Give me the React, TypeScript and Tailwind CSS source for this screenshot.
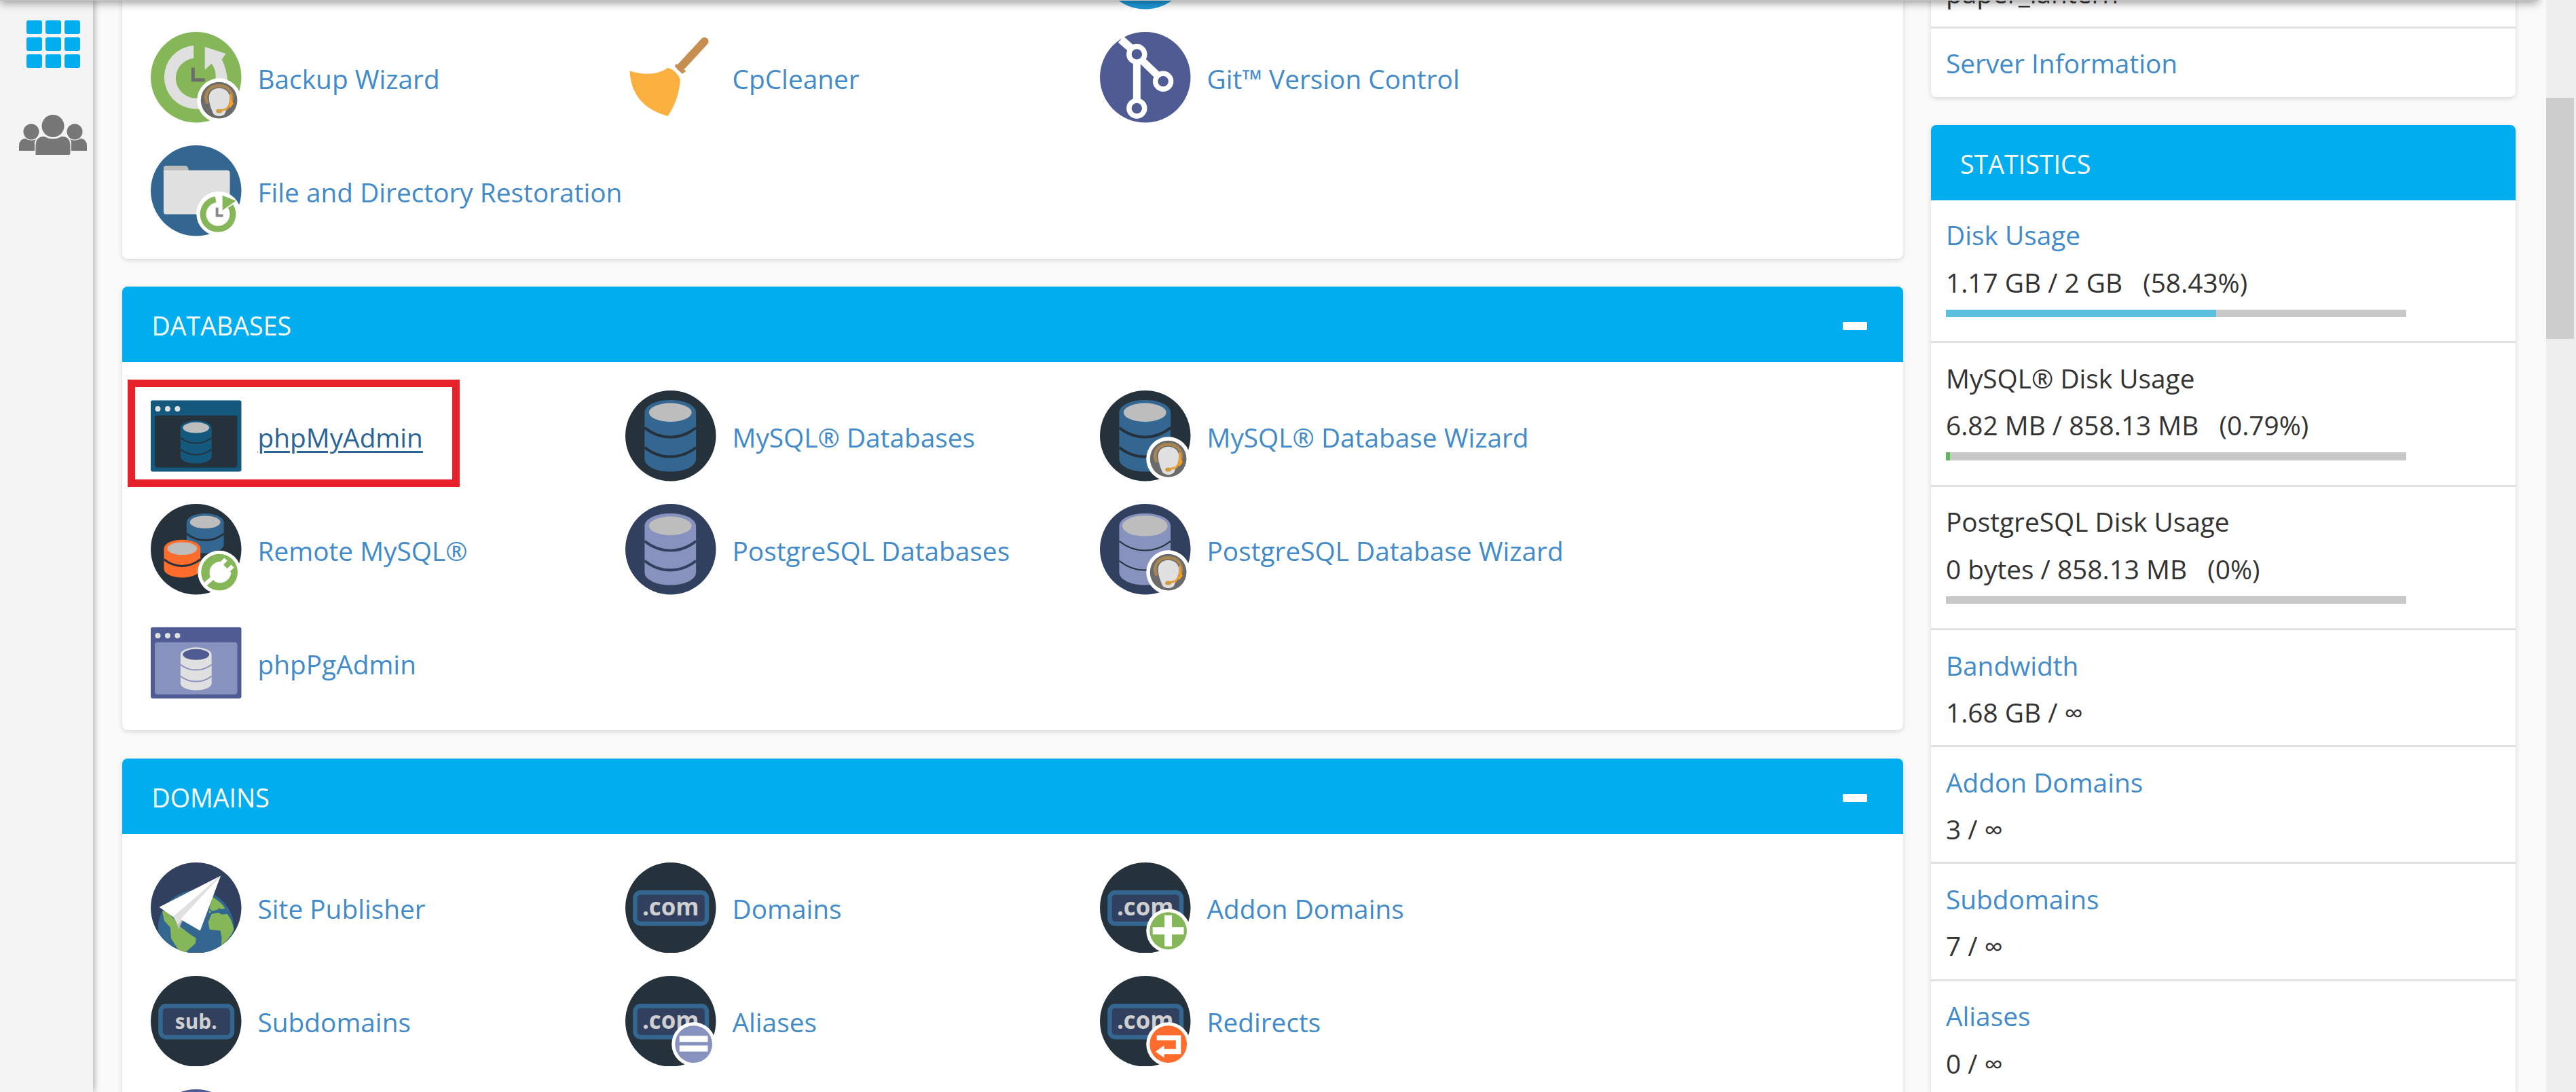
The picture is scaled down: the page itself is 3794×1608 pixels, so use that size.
import type { ReactNode } from "react";

const INK = "#26323b";
const NAVY = "#31405e";
const BLUE = "#336791";
const GREEN = "#85b657";
const ORANGE = "#ff6c2c";
const LILAC = "#8892bf";
const INDIGO = "#4f5b93";
const LIGHT = "#e0e0e0";
const SILVER = "#bdbdbd";

function Icon({ children }: { children?: ReactNode }) {
  return (
    <svg viewBox="0 0 134 134" className="block size-[133.5px] shrink-0">
      {children}
    </svg>
  );
}

function Disc({ fill }: { fill: string }) {
  return <circle cx="67" cy="67" r="67" fill={fill} />;
}

type CylinderProps = {
  x: number;
  w: number;
  top: number;
  bottom: number;
  ry: number;
  fill: string;
  lid: string;
  line: string;
  bands: number[];
  inset: number;
  stroke: number;
};

function Cylinder({ x, w, top, bottom, ry, fill, lid, line, bands, inset, stroke }: CylinderProps) {
  const r = x + w;
  const rx = w / 2;
  return (
    <g>
      <path
        d={`M${x} ${top + ry}A${rx} ${ry} 0 0 1 ${r} ${top + ry}V${bottom - ry}A${rx} ${ry} 0 0 1 ${x} ${bottom - ry}Z`}
        fill={fill}
      />
      <ellipse cx={x + rx} cy={top + ry} rx={rx - inset} ry={ry - inset * 0.72} fill={lid} />
      {bands.map((y) => (
        <path
          key={y}
          d={`M${x} ${y}Q${x + rx * 0.45} ${y + ry * 0.75} ${x + rx} ${y + ry * 0.75}T${r} ${y}`}
          fill="none"
          stroke={line}
          strokeWidth={stroke}
        />
      ))}
    </g>
  );
}

function WizardBadge() {
  return (
    <g>
      <circle cx="101" cy="101" r="32.500" fill="#fff" />
      <circle cx="101" cy="101" r="27" fill="#6b6b6b" />
      <path d="M84 106C77 92 86 79.500 101 79.500S125 92 118 106" fill="none" stroke="#a98552" strokeWidth="4.500" />
      <path d="M86 97C86 88 93 83 101 83S117 88 117 98C117 106 112 114 110 120C108 126 95 126 92 120C90 114 86 106 86 97Z" fill={LIGHT} />
      <path d="M118 92L119 105L112 114L100 117" fill="none" stroke="#e3a03a" strokeWidth="3" />
      <path d="M117 101L120 106L116 111" fill="none" stroke="#f7a11b" strokeWidth="4" />
      <ellipse cx="101" cy="117" rx="4.500" ry="3" fill="#d39a3c" />
    </g>
  );
}

function BackupWizardIcon() {
  return (
    <Icon>
      <Disc fill={GREEN} />
      <path d="M63.500 20A47 47 0 1 0 113.500 73C113 62 110 50 105 41L111 32L80 22V56L90 47A30 30 0 0 1 96 67A29.500 29.500 0 1 1 63.500 39Z" fill={LIGHT} />
      <path d="M62.500 53V71H80" fill="none" stroke="#6d6d6d" strokeWidth="5" />
      <WizardBadge />
    </Icon>
  );
}

function RestoreIcon() {
  return (
    <Icon>
      <Disc fill={BLUE} />
      <path d="M19 34a4 4 0 0 1 4-4H51q3 0 4 3l3 9H19Z" fill={SILVER} />
      <path d="M19 37H113q4 0 4 4V98q0 4-4 4H23q-4 0-4-4Z" fill={LIGHT} />
      <circle cx="100.500" cy="101" r="33" fill="#fff" />
      <path d="M96 80A22 22 0 1 0 118 90" fill="none" stroke={GREEN} strokeWidth="9" />
      <path d="M106 74L126 82L106 96Z" fill={GREEN} />
      <path d="M98 92V104H107" fill="none" stroke="#8a8a8a" strokeWidth="4" />
    </Icon>
  );
}

function BroomIcon() {
  return (
    <Icon>
      <path d="M117 14L82 52" stroke="#c68f50" strokeWidth="12" strokeLinecap="round" />
      <path d="M75 47L90 58L84 62L73 51Z" fill="#c68f50" />
      <path d="M6.500 57.500Q24 63.500 40 61.500Q53 60 63 53Q77 58 81 70Q80 98 63 124.500Q9 110 6.500 57.500Z" fill="#fbb040" />
    </Icon>
  );
}

function GitIcon() {
  return (
    <Icon>
      <Disc fill={INDIGO} />
      <g stroke="#fff" fill="none">
        <path d="M31 11L48 26" strokeWidth="12" />
        <path d="M54.500 42V103M60 40L86 65" strokeWidth="11" />
        <circle cx="54.500" cy="33" r="11.500" strokeWidth="7.500" fill={INDIGO} />
        <circle cx="93.500" cy="73" r="11.500" strokeWidth="7.500" fill={INDIGO} />
        <circle cx="54.500" cy="113" r="11.500" strokeWidth="7.500" fill={INDIGO} />
      </g>
    </Icon>
  );
}

function DatabaseIcon({ tone, wizard }: { tone: "mysql" | "pg"; wizard?: boolean }) {
  const pg = tone === "pg";
  return (
    <Icon>
      <Disc fill={pg ? NAVY : INK} />
      <Cylinder
        x={28.5}
        w={76}
        top={14}
        bottom={120}
        ry={18.5}
        fill={pg ? LILAC : BLUE}
        lid={SILVER}
        line={pg && !wizard ? NAVY : INK}
        bands={[55, 84]}
        inset={pg && wizard ? 4.5 : 6.5}
        stroke={pg && wizard ? 2 : 4}
      />
      {wizard && <WizardBadge />}
    </Icon>
  );
}

function WindowIcon({ frame, panel, body, lid }: { frame: string; panel: string; body: string; lid: string }) {
  return (
    <Icon>
      <rect x="0" y="14.500" width="134" height="105.500" rx="3" fill={frame} />
      <rect x="6" y="37" width="122" height="77" rx="4" fill={panel} />
      <circle cx="10.500" cy="27" r="4" fill={LIGHT} />
      <circle cx="25" cy="27" r="4" fill={LIGHT} />
      <circle cx="39.500" cy="27" r="4" fill={LIGHT} />
      <Cylinder x={44} w={46} top={44.5} bottom={108} ry={10.5} fill={body} lid={lid} line={panel} bands={[70, 87]} inset={3.5} stroke={2} />
    </Icon>
  );
}

function RemoteIcon() {
  return (
    <Icon>
      <Disc fill={INK} />
      <Cylinder x={53} w={55} top={14} bottom={73} ry={13} fill={BLUE} lid={SILVER} line={INK} bands={[44]} inset={5} stroke={3} />
      <Cylinder x={19.5} w={54} top={53} bottom={109} ry={13} fill={ORANGE} lid={SILVER} line={INK} bands={[82]} inset={5} stroke={3} />
      <circle cx="101.500" cy="101" r="32" fill="#fff" />
      <circle cx="101.500" cy="101" r="27" fill={GREEN} />
      <path d="M78 121L92 109" stroke="#fff" strokeWidth="6" />
      <path d="M88 108C84 95 92 86 103 85L119 102C117 114 105 120 95 115Z" fill="#fff" />
      <path d="M102 91L111 82M112 101L121 92" stroke="#fff" strokeWidth="6" />
    </Icon>
  );
}

function PublisherIcon() {
  return (
    <Icon>
      <defs>
        <clipPath id="disc">
          <circle cx="67" cy="67" r="67" />
        </clipPath>
      </defs>
      <Disc fill={NAVY} />
      <g clipPath="url(#disc)">
        <circle cx="67" cy="97" r="56" fill={BLUE} />
        <path d="M91 51Q104 58 110 68L97 70L86 75L87 66Z" fill={GREEN} />
        <path d="M90 76L100 74L105 77L113 76Q121 86 123 99Q116 114 104 123L105 112L103 101L87 99L85 88Z" fill={GREEN} />
        <path d="M17 72L24 72L45 96L58 106L67 112L66 120L58 127L50 134L40 128L30 112L29 96L20 86Z" fill={GREEN} />
        <path d="M86 69l5 4l6-1m3-4l5 3l6-1" fill="none" stroke={BLUE} strokeWidth="2" />
      </g>
      <path d="M36 80L41 99L47 86Z" fill={SILVER} />
      <path d="M103.500 19.500L12.500 66L34 81Z" fill="#fff" />
      <path d="M103.500 19.500L33 80L40 92L46 85Z" fill={LIGHT} />
      <path d="M103.500 19.500L44 84L73 101Z" fill="#fff" />
    </Icon>
  );
}

function DomainIcon({ label, children }: { label: string; children?: ReactNode }) {
  const sub = label === "sub.";
  return (
    <Icon>
      <Disc fill={INK} />
      <rect x="14.500" y="44.500" width="106" height="46" rx="8" fill={NAVY} stroke={BLUE} strokeWidth="6.500" />
      <text
        x="67"
        y="78.500"
        textAnchor="middle"
        fontFamily="'Open Sans', sans-serif"
        fontWeight="700"
        fontSize={sub ? 30 : 35}
        fill="#cfcfcf"
      >
        {label}
      </text>
      {children}
    </Icon>
  );
}

function Badge({ fill, children }: { fill: string; children: ReactNode }) {
  return (
    <g>
      <circle cx="101" cy="101" r="32.500" fill="#fff" />
      <circle cx="101" cy="101" r="27.500" fill={fill} />
      {children}
    </g>
  );
}

type Item = { label?: string; icon?: ReactNode; active?: boolean };

const files: Item[] = [
  {},
  {},
  { icon: <Icon><Disc fill="#1c9ad8" /></Icon> },
  { label: "Backup Wizard", icon: <BackupWizardIcon /> },
  { label: "CpCleaner", icon: <BroomIcon /> },
  { label: "Git™ Version Control", icon: <GitIcon /> },
  { label: "File and Directory Restoration", icon: <RestoreIcon /> },
];

const databases: Item[] = [
  { label: "phpMyAdmin", active: true, icon: <WindowIcon frame="#15587d" panel={INK} body="#15587d" lid={SILVER} /> },
  { label: "MySQL® Databases", icon: <DatabaseIcon tone="mysql" /> },
  { label: "MySQL® Database Wizard", icon: <DatabaseIcon tone="mysql" wizard /> },
  { label: "Remote MySQL®", icon: <RemoteIcon /> },
  { label: "PostgreSQL Databases", icon: <DatabaseIcon tone="pg" /> },
  { label: "PostgreSQL Database Wizard", icon: <DatabaseIcon tone="pg" wizard /> },
  { label: "phpPgAdmin", icon: <WindowIcon frame={INDIGO} panel={LILAC} body={LIGHT} lid={INDIGO} /> },
];

const domains: Item[] = [
  { label: "Site Publisher", icon: <PublisherIcon /> },
  { label: "Domains", icon: <DomainIcon label=".com" /> },
  {
    label: "Addon Domains",
    icon: (
      <DomainIcon label=".com">
        <Badge fill={GREEN}>
          <path d="M78 101H124M101 78V124" stroke="#fff" strokeWidth="11" />
        </Badge>
      </DomainIcon>
    ),
  },
  { label: "Subdomains", icon: <DomainIcon label="sub." /> },
  {
    label: "Aliases",
    icon: (
      <DomainIcon label=".com">
        <Badge fill={LILAC}>
          <path d="M80 93H122M80 107.500H122" stroke="#fff" strokeWidth="9" />
        </Badge>
      </DomainIcon>
    ),
  },
  {
    label: "Redirects",
    icon: (
      <DomainIcon label=".com">
        <Badge fill={ORANGE}>
          <path d="M84 91.500H116V112H94" fill="none" stroke="#fff" strokeWidth="7.500" />
          <path d="M82 112L95 103V121Z" fill="#fff" />
        </Badge>
      </DomainIcon>
    ),
  },
  { icon: <Icon><Disc fill={INDIGO} /></Icon> },
];

function ItemGrid({ items }: { items: Item[] }) {
  return (
    <div className="grid grid-cols-[699px_699px_1fr] auto-rows-[167px] pl-[42px]">
      {items.map((item, i) => (
        <div key={i} className="relative flex items-center gap-[24px]">
          {item.icon}
          {item.label && (
            <a
              className={
                item.active
                  ? "pt-[4px] whitespace-nowrap text-[#2a6496] underline decoration-[3px] underline-offset-[5px]"
                  : "pt-[4px] whitespace-nowrap text-[#428bca]"
              }
            >
              {item.label}
            </a>
          )}
          {item.active && (
            <span className="absolute top-[0.500px] left-[-34px] h-[158px] w-[489px] border-[11.500px] border-[#e6212a]" />
          )}
        </div>
      ))}
    </div>
  );
}

function Header({ title, collapsible }: { title: string; collapsible?: boolean }) {
  return (
    <div className="flex h-[111px] items-center justify-between rounded-t-[8px] bg-[#00aeef] pr-[53px] pl-[43.500px] text-[37.600px] text-white">
      <span className="pt-[5px]">{title}</span>
      {collapsible && <span className="mt-[5px] h-[12px] w-[36px] rounded-[2px] bg-white" />}
    </div>
  );
}

const cardClass = "rounded-[8px] bg-white shadow-[0_2px_7px_rgba(0,0,0,0.150)]";

type Stat = { name: string; link?: boolean; value: string; pct?: number; color?: string };

const stats: Stat[] = [
  { name: "Disk Usage", link: true, value: "1.17 GB / 2 GB \u00a0 (58.43%)", pct: 58.7, color: "#5bc0de" },
  { name: "MySQL® Disk Usage", value: "6.82 MB / 858.13 MB \u00a0 (0.79%)", pct: 0.85, color: "#5cb85c" },
  { name: "PostgreSQL Disk Usage", value: "0 bytes / 858.13 MB \u00a0 (0%)", pct: 0, color: "#5cb85c" },
  { name: "Bandwidth", link: true, value: "1.68 GB / ∞" },
  { name: "Addon Domains", link: true, value: "3 / ∞" },
  { name: "Subdomains", link: true, value: "7 / ∞" },
  { name: "Aliases", link: true, value: "0 / ∞" },
];

function StatRow({ stat, first }: { stat: Stat; first: boolean }) {
  const hasBar = stat.pct !== undefined;
  return (
    <div
      className={
        (first ? "h-[207.800px] " : hasBar ? "h-[211.400px] border-t-[3px] " : "h-[172.200px] border-t-[3px] ") +
        "border-[#e1e1e1] pt-[17.500px] pl-[22.500px] leading-[69.500px] text-[#333]"
      }
    >
      <div className={stat.link ? "text-[#428bca]" : ""}>{stat.name}</div>
      <div>{stat.value}</div>
      {hasBar && (
        <div className="mt-[4.500px] h-[11.500px] w-[678px] bg-[#c7c7c7]">
          <div className="h-full" style={{ width: `${stat.pct}%`, background: stat.color }} />
        </div>
      )}
    </div>
  );
}

function Sidebar() {
  return (
    <aside className="z-10 flex w-[137px] shrink-0 flex-col bg-[#f4f4f4] shadow-[2px_0_9px_rgba(0,0,0,0.300)]">
      <div className="mt-[30px] ml-[39px] grid w-[79px] grid-cols-3 gap-[5px]">
        {Array.from({ length: 9 }, (_, i) => (
          <span key={i} className="h-[20px] rounded-[3px] bg-[#00aeef]" />
        ))}
      </div>
      <svg viewBox="0 0 100 60" className="mt-[69px] ml-[28px] h-[60px] w-[100px]" fill="#777">
        <circle cx="18" cy="25" r="11.500" />
        <circle cx="82" cy="25" r="11.500" />
        <path d="M0 53V46Q0 36 9 35Q18 40 25 36L23 40V53Z" />
        <path d="M100 53V46Q100 36 91 35Q82 40 75 36L77 40V53Z" />
        <circle cx="50" cy="16.500" r="16.500" />
        <path d="M24.500 59V45Q25 32 37 32Q50 39 63 32Q75 32 75.500 45V57Q75.500 59 73.500 59Z" />
      </svg>
    </aside>
  );
}

export default function App() {
  return (
    <div className="relative flex h-[1608px] w-[3794px] overflow-hidden bg-[#fafafa] font-['Open_Sans',sans-serif] text-[38.800px]">
      <Sidebar />
      <main className="ml-[43px] flex w-[2622.500px] shrink-0 flex-col gap-[41.500px]">
        <section className={`${cardClass} mt-[-136.700px] pb-[16.500px]`}>
          <ItemGrid items={files} />
        </section>
        <section className={cardClass}>
          <Header title="DATABASES" collapsible />
          <div className="pt-[25px] pb-[16px]">
            <ItemGrid items={databases} />
          </div>
        </section>
        <section className={cardClass}>
          <Header title="DOMAINS" collapsible />
          <div className="pt-[25px] pb-[16.500px]">
            <ItemGrid items={domains} />
          </div>
        </section>
      </main>
      <div className="ml-[41px] flex w-[861.500px] shrink-0 flex-col gap-[41px] leading-[69.500px]">
        <section className={`${cardClass} mt-[-44.200px]`}>
          <div className="h-[83.200px] pl-[22.500px] text-[#333]">paper_lantern</div>
          <div className="h-[103.500px] border-t-[3px] border-[#e1e1e1] pt-[17px] pl-[22.500px] text-[#428bca]">
            Server Information
          </div>
        </section>
        <section className={cardClass}>
          <Header title="STATISTICS" />
          {stats.map((stat, i) => (
            <StatRow key={stat.name} stat={stat} first={i === 0} />
          ))}
        </section>
      </div>
      <div className="ml-auto flex w-[44px] flex-col bg-[#eeeeee]">
        <div className="mt-[144px] h-[355px] w-[41px] bg-[#cdcdcd]" />
      </div>
      <div className="absolute top-[-10px] left-0 z-20 h-[10.500px] w-[3738px] bg-[#c2c2c2] shadow-[0_2px_14px_rgba(0,0,0,0.500)]" />
    </div>
  );
}
